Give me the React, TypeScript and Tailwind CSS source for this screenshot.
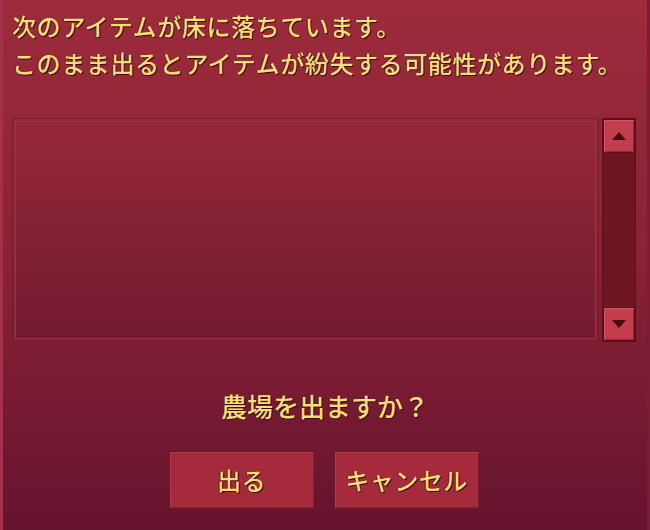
import React from 'react'

const textStyle =
  "text-[#f7dd78] font-medium [text-shadow:1px_1px_0_#3a0a14,-1px_0_0_#5a1420] [font-family:'Noto_Sans_CJK_JP','Noto_Sans',sans-serif]"

const ScrollButton: React.FC<{ direction: 'up' | 'down' }> = ({ direction }) => (
  <div className="h-[34px] w-full shrink-0 border border-[#5c1019] bg-[#c43d4c] shadow-[inset_1px_1px_0_#d65466,inset_-1px_-1px_0_#962636] flex items-center justify-center">
    <svg width="14" height="8" viewBox="0 0 14 8">
      {direction === 'up' ? (
        <polygon points="7,0 14,8 0,8" fill="#4a0a12" />
      ) : (
        <polygon points="0,0 14,0 7,8" fill="#4a0a12" />
      )}
    </svg>
  </div>
)

const DialogButton: React.FC<{ label: string }> = ({ label }) => (
  <button className="w-[146px] h-[58px] border border-[#6e1628] bg-[#a52a3b] shadow-[inset_1px_1px_0_#b8394a,inset_-1px_-1px_0_#86202f] flex items-center justify-center">
    <span className={`text-[24px] leading-none tracking-[0.5px] ${textStyle}`}>{label}</span>
  </button>
)

export default function App() {
  return (
    <div className="w-[650px] h-[530px] overflow-hidden bg-gradient-to-b from-[#9d2b3c] via-[#882236] to-[#66132f] border-l-[3px] border-l-[#a5304a] border-r-[3px] border-r-[#7a1c34] flex flex-col pl-[9px] pr-[11px] pt-[7px]">
      {/* warning message */}
      <div className={`text-[24px] leading-[37px] tracking-[0.6px] ${textStyle}`}>
        <p>次のアイテムが床に落ちています。</p>
        <p>このまま出るとアイテムが紛失する可能性があります。</p>
      </div>

      {/* item list with scrollbar */}
      <div className="mt-[37px] h-[224px] flex gap-[3px]">
        <div className="flex-1 border border-[#7b1a2c] p-[2px]">
          <div className="h-full border border-[#9a3346] bg-gradient-to-b from-[#952838] to-[#731a31]" />
        </div>
        <div className="w-[34px] flex flex-col bg-[#6d1520] border border-[#5a1018]">
          <ScrollButton direction="up" />
          <div className="flex-1" />
          <ScrollButton direction="down" />
        </div>
      </div>

      {/* confirmation */}
      <p className={`mt-[49px] text-center text-[26px] leading-[30px] pl-[2px] ${textStyle}`}>
        農場を出ますか？
      </p>

      <div className="mt-[30px] flex justify-center gap-[19px]">
        <DialogButton label="出る" />
        <DialogButton label="キャンセル" />
      </div>
    </div>
  )
}
